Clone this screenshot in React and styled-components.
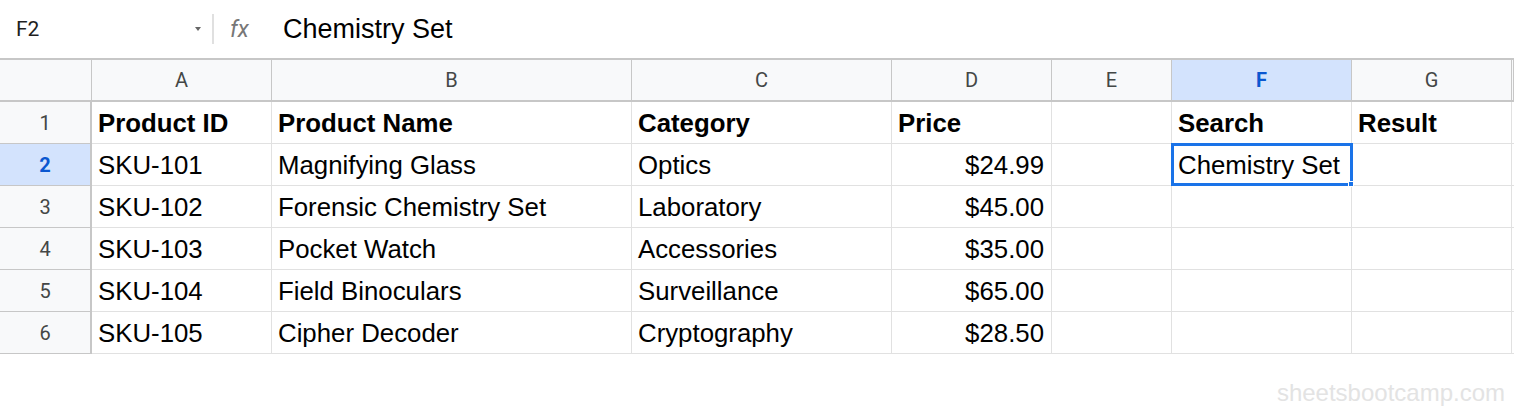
import React from 'react';
import styled, { createGlobalStyle } from 'styled-components';

const Global = createGlobalStyle`
  body {
    margin: 0;
    background: #ffffff;
    font-family: "Liberation Sans", Arial, sans-serif;
  }
`;

const Page = styled.div`
  width: 1514px;
  height: 414px;
  position: relative;
  overflow: hidden;
  background: #fff;
`;

const FormulaBar = styled.div`
  display: flex;
  align-items: center;
  border-bottom: 2px solid #c7c7c7;
  box-sizing: border-box;
  height: 60px;
`;

const NameBox = styled.div`
  width: 210px;
  padding-left: 16px;
  box-sizing: border-box;
  display: flex;
  align-items: center;
  justify-content: space-between;
  font-family: Roboto, "Liberation Sans", sans-serif;
  font-size: 21px;
  color: #1f1f1f;
`;

const Caret = styled.span`
  width: 0;
  height: 0;
  border-left: 3px solid transparent;
  border-right: 3px solid transparent;
  border-top: 4px solid #666;
  margin-right: 9px;
`;

const Divider = styled.div`
  width: 2px;
  height: 30px;
  background: #e0e0e0;
  margin-left: 2px;
`;

const Fx = styled.div`
  font-family: Roboto, "Liberation Sans", sans-serif;
  font-style: italic;
  font-size: 23px;
  color: #777;
  width: 69px;
  padding-left: 16px;
  box-sizing: border-box;
`;

const FormulaText = styled.div`
  font-size: 27px;
  color: #000;
  font-family: "Liberation Sans", Arial, sans-serif;
`;

const Grid = styled.div`
  display: grid;
  grid-template-columns: 92px 180px 360px 260px 160px 120px 180px 160px 2px;
  grid-auto-rows: 42px;
`;

const ColHead = styled.div`
  background: ${p => (p.$active ? '#d3e3fd' : '#f8f9fa')};
  border-right: 1px solid #c7c7c7;
  border-bottom: 2px solid #c7c7c7;
  box-sizing: border-box;
  display: flex;
  align-items: center;
  justify-content: center;
  font-family: Roboto, "Liberation Sans", sans-serif;
  font-size: 20px;
  font-weight: ${p => (p.$active ? 700 : 400)};
  color: ${p => (p.$active ? '#0b57d0' : '#444746')};
`;

const RowHead = styled.div`
  background: ${p => (p.$active ? '#d3e3fd' : '#f8f9fa')};
  border-right: 2px solid #c7c7c7;
  border-bottom: 1px solid #c7c7c7;
  box-sizing: border-box;
  display: flex;
  align-items: center;
  justify-content: center;
  font-family: Roboto, "Liberation Sans", sans-serif;
  font-size: 20px;
  font-weight: ${p => (p.$active ? 700 : 400)};
  color: ${p => (p.$active ? '#0b57d0' : '#444746')};
`;

const Cell = styled.div`
  position: relative;
  border-right: 1px solid #e1e1e1;
  border-bottom: 1px solid #e1e1e1;
  box-sizing: border-box;
  display: flex;
  align-items: center;
  justify-content: ${p => (p.$right ? 'flex-end' : 'flex-start')};
  padding: 2px 7px 0 6px;
  font-size: 25.8px;
  font-weight: ${p => (p.$bold ? 700 : 400)};
  color: #000;
  white-space: nowrap;
`;

const Selection = styled.div`
  position: absolute;
  z-index: 5;
  left: -1px;
  top: -1px;
  right: -2px;
  bottom: -1px;
  border: 3px solid #1a73e8;
  pointer-events: none;
`;

const Handle = styled.div`
  position: absolute;
  right: -4px;
  bottom: -4px;
  width: 4px;
  height: 4px;
  background: #1a73e8;
  border: 1px solid #fff;
`;

const Watermark = styled.div`
  position: absolute;
  right: 9px;
  bottom: 7px;
  font-size: 24px;
  color: #e3e3e3;
  font-family: "Liberation Sans", Arial, sans-serif;
`;

const cols = ['A', 'B', 'C', 'D', 'E', 'F', 'G'];

const rows = [
  ['Product ID', 'Product Name', 'Category', 'Price', '', 'Search', 'Result'],
  ['SKU-101', 'Magnifying Glass', 'Optics', '$24.99', '', 'Chemistry Set', ''],
  ['SKU-102', 'Forensic Chemistry Set', 'Laboratory', '$45.00', '', '', ''],
  ['SKU-103', 'Pocket Watch', 'Accessories', '$35.00', '', '', ''],
  ['SKU-104', 'Field Binoculars', 'Surveillance', '$65.00', '', '', ''],
  ['SKU-105', 'Cipher Decoder', 'Cryptography', '$28.50', '', '', ''],
];

export default function App() {
  return (
    <Page>
      <Global />
      <FormulaBar>
        <NameBox>
          F2
          <Caret />
        </NameBox>
        <Divider />
        <Fx>fx</Fx>
        <FormulaText>Chemistry Set</FormulaText>
      </FormulaBar>
      <Grid>
        <ColHead />
        {cols.map(c => (
          <ColHead key={c} $active={c === 'F'}>{c}</ColHead>
        ))}
        <ColHead />
        {rows.map((r, i) => (
          <React.Fragment key={i}>
            <RowHead $active={i === 1}>{i + 1}</RowHead>
            {r.map((v, j) => (
              <Cell key={j} $bold={i === 0} $right={i > 0 && j === 3}>
                {v}
                {i === 1 && j === 5 && (
                  <Selection>
                    <Handle />
                  </Selection>
                )}
              </Cell>
            ))}
            <Cell />
          </React.Fragment>
        ))}
      </Grid>
      <Watermark>sheetsbootcamp.com</Watermark>
    </Page>
  );
}
